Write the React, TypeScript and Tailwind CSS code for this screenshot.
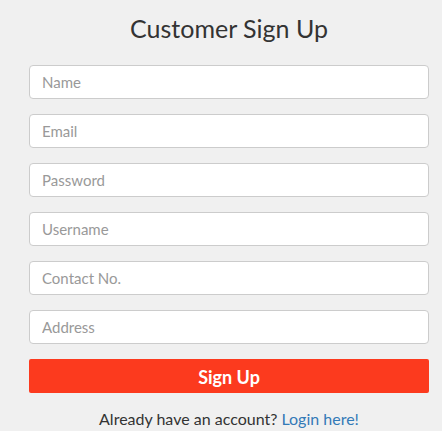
import React from "react";

const fields = ["Name", "Email", "Password", "Username", "Contact No.", "Address"];

export default function App() {
  return (
    <div
      className="min-h-[431px] w-full bg-[#f0f0f0] pt-[13px]"
      style={{ fontFamily: "Lato, 'Open Sans', sans-serif" }}
    >
      <div className="ml-[29px] w-[400px]">
        <h1 className="text-center text-[25px] leading-[30px] text-[#333]">Customer Sign Up</h1>
        <div className="mt-[22px] flex flex-col gap-[15px]">
          {fields.map((f) => (
            <input
              key={f}
              placeholder={f}
              className="h-[34px] w-full rounded-[4px] border border-[#ccc] bg-white px-[12px] text-[15px] text-[#555] placeholder:text-[#999] outline-none"
            />
          ))}
        </div>
        <button className="mt-[15px] h-[34px] w-full rounded-[2px] bg-[#fc3a1e] pt-[2px] text-[18px] font-bold text-white">
          Sign Up
        </button>
        <p className="mt-[16px] text-center text-[16px] leading-[20px] text-[#333]">
          Already have an account? <a className="text-[#337ab7]">Login here!</a>
        </p>
      </div>
    </div>
  );
}
